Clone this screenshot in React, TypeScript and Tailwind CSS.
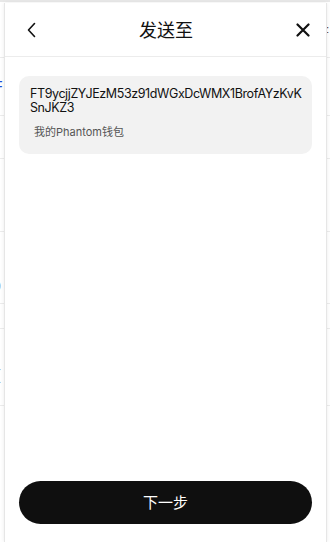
import React from "react";

const BackPage = () => {
  return (
    <div className="w-full h-[542px] bg-white text-[#1d4ed8] font-['Liberation_Sans',sans-serif] text-[14px]">
      <div className="h-[2px] bg-[#e8e8e8]" />
      <div className="h-[56px] border-b border-[#ececec] flex justify-end items-center pr-[1px]">
        <span className="text-[#222] text-[10px] leading-[13px]">:</span>
      </div>
      <div className="h-[58px] border-b border-[#ececec] flex items-center -ml-[6px]">
        <span>F</span>
      </div>
      <div className="h-[43px] border-b border-[#ececec]" />
      <div className="h-[73px] border-b border-[#ececec]" />
      <div className="h-[72px] border-b border-[#ececec] flex items-start pt-[44px] -ml-[7px] text-[#777]">
        <span>0</span>
      </div>
      <div className="h-[25px] border-b border-[#ececec]" />
      <div className="h-[77px] border-b border-[#ececec] flex items-start pt-[36px] -ml-[4px] text-[#777]">
        <span>(</span>
      </div>
    </div>
  );
};

const SendTo = () => {
  return (
    <div className="absolute left-[4px] right-[3px] top-[3px] bottom-0 bg-white border-x border-[#e6e6e6] shadow-[0_0_4px_rgba(0,0,0,0.08)] flex flex-col font-['Liberation_Sans','Noto_Sans_CJK_SC',sans-serif]">
      <div className="h-[54px] shrink-0 border-b border-[#ececec] flex items-center justify-between px-[20px]">
        <svg width="12" height="16" viewBox="0 0 12 16" className="ml-[1px]">
          <path d="M8.5 1.5 L2.5 8 L8.5 14.5" fill="none" stroke="#111" strokeWidth="1.6" strokeLinecap="round" strokeLinejoin="round" />
        </svg>
        <p className="text-[18px] text-[#111] font-['Noto_Sans_CJK_SC',sans-serif] -ml-[2px]">发送至</p>
        <svg width="14" height="14" viewBox="0 0 14 14" className="mr-[-4px]">
          <path d="M1.5 1.5 L12.5 12.5 M12.5 1.5 L1.5 12.5" fill="none" stroke="#111" strokeWidth="2.2" strokeLinecap="round" />
        </svg>
      </div>
      <div className="px-[14px] pt-[19px] flex-1">
        <div className="rounded-[10px] bg-[#f2f2f2] pl-[11px] pr-[4px] pt-[11px] pb-[13px]">
          <div className="text-[12.5px] leading-[14px] text-[#111] whitespace-nowrap font-['Inter',sans-serif] tracking-[-0.4px]">
            <p>FT9ycjjZYJEzM53z91dWGxDcWMX1BrofAYzKvK</p>
            <p>SnJKZ3</p>
          </div>
          <p className="mt-[9px] pl-[4px] text-[11px] text-[#555] font-['Inter','Noto_Sans_CJK_SC',sans-serif]">
            我的Phantom钱包
          </p>
        </div>
      </div>
      <div className="px-[14px] pb-[18px]">
        <button className="w-full h-[43px] rounded-full bg-[#0f0f0f] text-white text-[15px] font-['Noto_Sans_CJK_SC',sans-serif]">
          下一步
        </button>
      </div>
    </div>
  );
};

const App = () => {
  return (
    <div className="relative w-[330px] h-[542px] overflow-hidden bg-white">
      <BackPage />
      <SendTo />
    </div>
  );
};

export default App;
